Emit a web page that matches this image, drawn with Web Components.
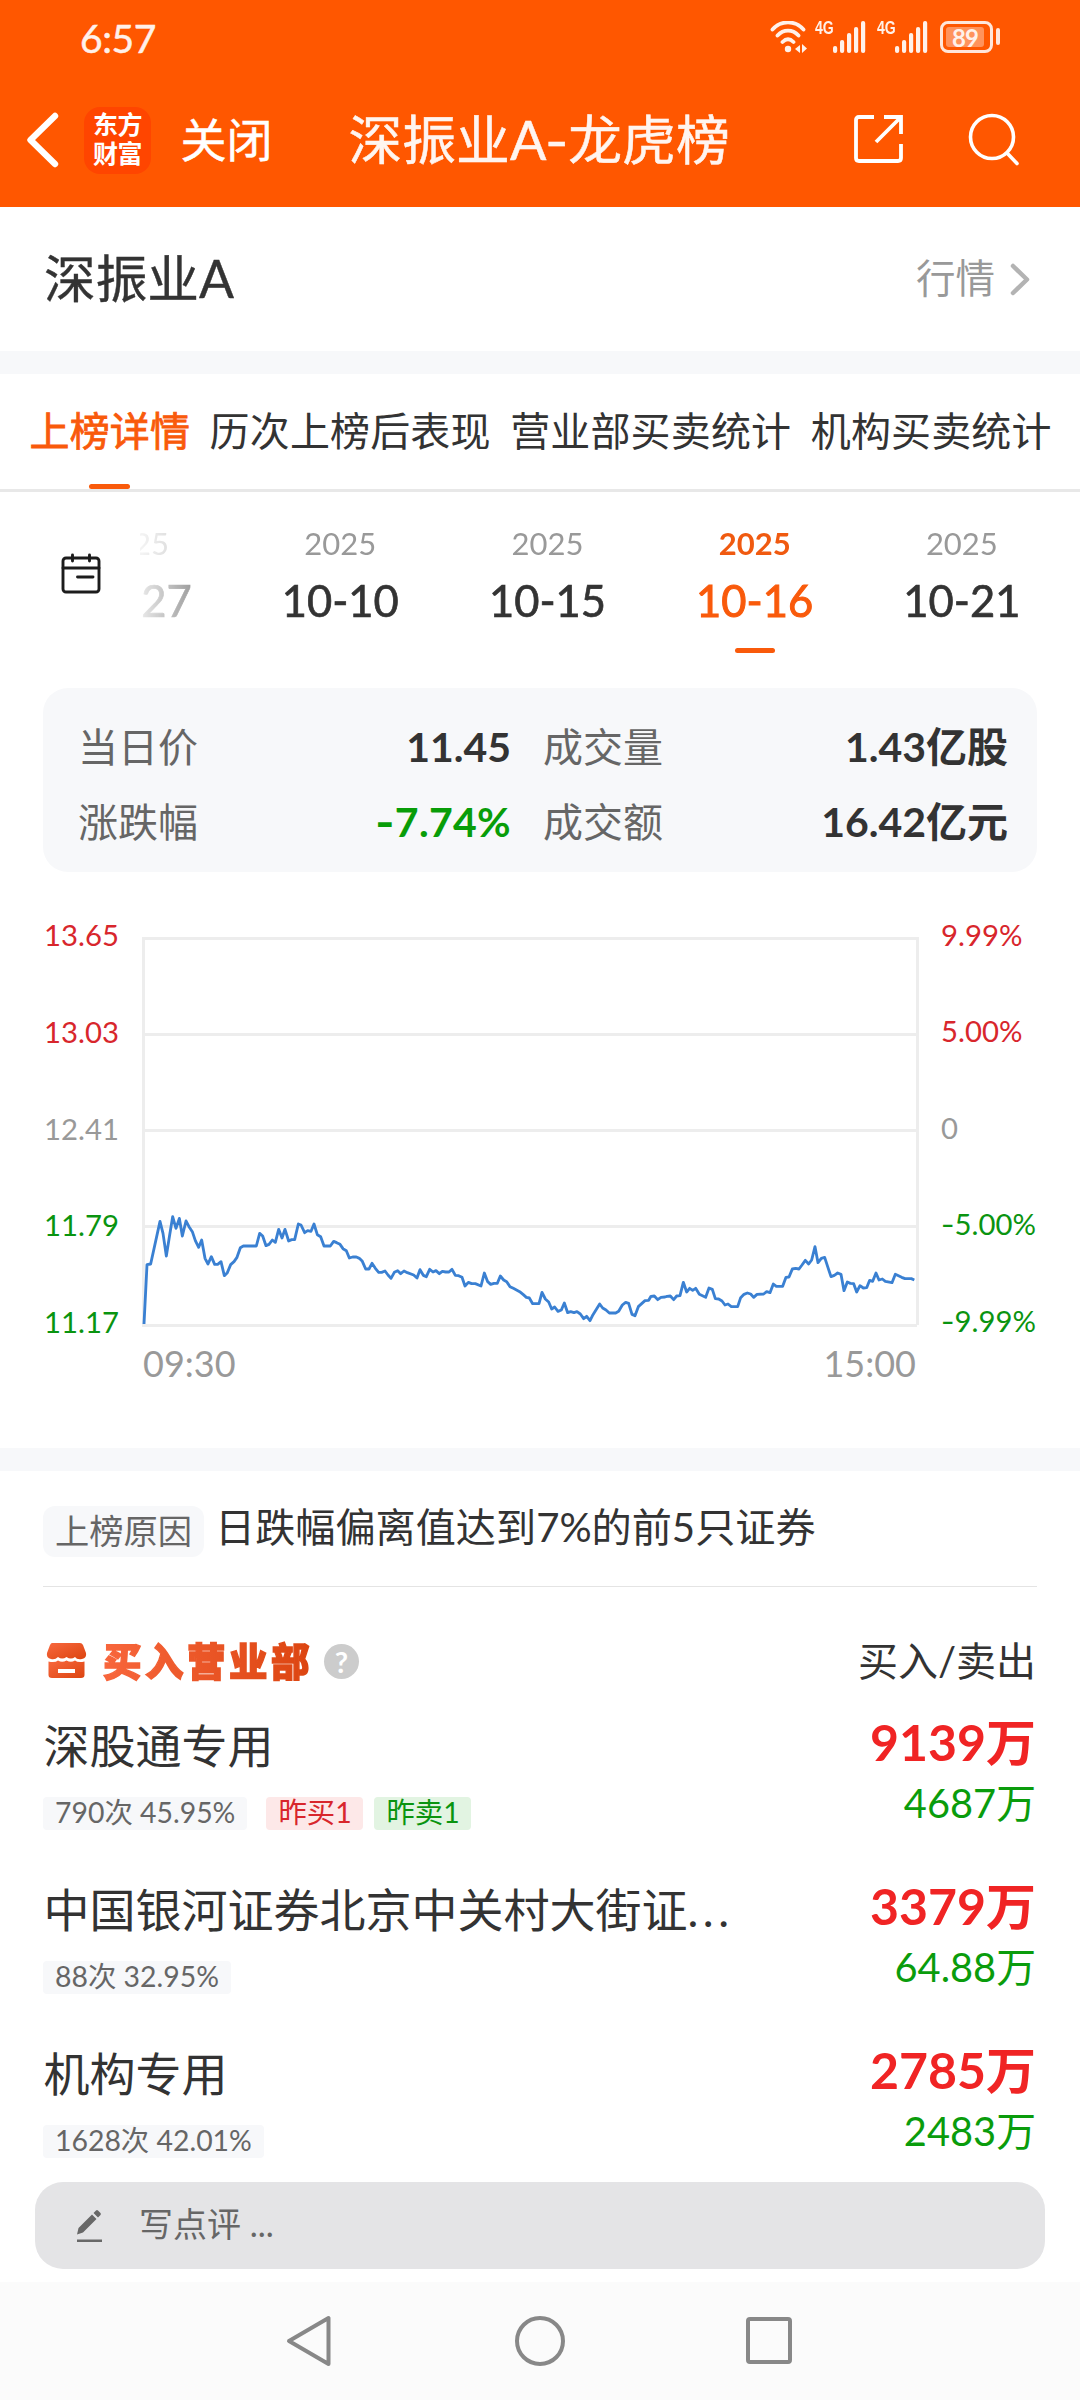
<!DOCTYPE html>
<html lang="zh-CN">
<head>
<meta charset="utf-8">
<title>深振业A-龙虎榜</title>
<style>
html,body{margin:0;padding:0;background:#fff}
body{width:1080px;height:2400px;overflow:hidden;font-family:Lato,"Noto Sans CJK SC",sans-serif;color:#333;-webkit-font-smoothing:antialiased}
</style>
</head>
<body>
<lhb-app></lhb-app>
<script>
const define = (name, html, setup) => customElements.define(name, class extends HTMLElement {
  constructor() {
    super();
    const t = document.createElement('template');
    t.innerHTML = '<style>:host{display:block;box-sizing:border-box}*{box-sizing:border-box}svg{display:block;flex:none}</style>' + html;
    this.attachShadow({mode: 'open'}).append(t.content.cloneNode(true));
  }
  connectedCallback() { if (setup) setup(this, this.shadowRoot); }
});

define('status-bar', `
<style>
:host{display:flex;height:76px;align-items:center;padding:0 80px 0 80px;justify-content:space-between;color:#fff1ea;font-size:39px;letter-spacing:-.4px}
.time{-webkit-text-stroke:.5px #fff1ea}
.r{display:flex;align-items:flex-start;height:32px;margin-top:-3px}
.g{font:700 18px/15px "Liberation Sans",sans-serif;letter-spacing:0;width:24px;transform:scaleX(.78);transform-origin:0 0;margin-right:-6px}
.bat{display:flex;align-items:center;margin-left:11.5px}
.cell{width:53px;height:32px;border:3px solid #ffe6da;border-radius:8px;padding:3px;display:flex}
.lv{width:38px;background:rgba(255,255,255,.36);border-radius:3px;font-size:24px;line-height:21px;height:20px;padding-left:6px;font-weight:700;letter-spacing:-1px;white-space:nowrap}
.cap{width:4px;height:17px;border-radius:2px;background:#ffe6da;margin-left:3px}
</style>
<span class="time">6:57</span>
<div class="r">
<svg width="38" height="32" viewBox="0 0 38 32" fill="none" stroke="#fff1ea" stroke-width="3.8" stroke-linecap="round"><path d="M2.5 8.5C11-1 25-1 33.500 8.500M7.500 14.500C13.500 8 22.500 8 28.500 14.500M12.500 21C16 17.500 20 17.500 23.500 21"/><circle cx="18" cy="28" r="3.200" fill="#fff1ea" stroke="none"/><path d="M30 24v8l-5-4zM32 23l5 4.500-5 4.500z" fill="#fff1ea" stroke="none"/></svg>
<span class="g" style="margin-left:7px">4G</span>
<svg width="34" height="32" fill="#fff1ea"><rect y="25" width="4.200" height="7" rx="2"/><rect x="7" y="19" width="4.200" height="13" rx="2"/><rect x="14" y="12" width="4.200" height="20" rx="2"/><rect x="21" y="6" width="4.200" height="26" rx="2"/><rect x="28" width="4.200" height="32" rx="2"/></svg>
<span class="g" style="margin-left:9.500px">4G</span>
<svg width="34" height="32" fill="#fff1ea"><rect y="25" width="4.200" height="7" rx="2"/><rect x="7" y="19" width="4.200" height="13" rx="2"/><rect x="14" y="12" width="4.200" height="20" rx="2"/><rect x="21" y="6" width="4.200" height="26" rx="2"/><rect x="28" width="4.200" height="32" rx="2"/></svg>
<div class="bat"><div class="cell"><div class="lv">89</div></div><div class="cap"></div></div>
</div>`);

define('nav-header', `
<style>
:host{display:flex;height:131px;align-items:center;padding-left:26px;color:#fff}
.logo{width:67px;height:67px;margin:-3px 0 0 24px;border-radius:16px;background:#ff4500;font-weight:700;font-size:25px;line-height:29.500px;text-align:center;padding-top:3px;letter-spacing:-.5px}
.close{font-size:46px;line-height:60px;margin:-3px 0 0 29.500px;-webkit-text-stroke:.5px #fff}
.title{font-size:53.800px;line-height:70px;margin:-3px 0 0 76px;width:384px;white-space:nowrap;color:#fff5f0;-webkit-text-stroke:.5px #fff5f0}
.title i{font-style:normal;font-family:Inter,Lato,sans-serif;font-size:50px;margin-left:-1px}
</style>
<svg width="34" height="58" viewBox="0 0 34 58" fill="none" stroke="#fff" stroke-width="6.400" stroke-linecap="round" stroke-linejoin="round" style="margin-top:-4px"><path d="M29 5 4.500 29 29 53"/></svg>
<div class="logo">东方<br>财富</div>
<span class="close">关闭</span>
<span class="title">深振业A<i>-</i>龙虎榜</span>
<svg width="50" height="50" viewBox="0 0 50 50" fill="none" stroke="#fff" stroke-width="3.800" style="margin:-5px 0 0 120px"><path d="M21 3H6Q3 3 3 6V44Q3 47 6 47H45Q48 47 48 44V30M31 3H48V20M46 5 23 28"/></svg>
<svg width="54" height="54" viewBox="0 0 54 54" fill="none" stroke="#fff" stroke-width="3.600" stroke-linecap="round" style="margin:-4px 0 0 65px"><circle cx="24" cy="24" r="21.500"/><path d="m39.500 40.500 9.500 10"/></svg>`);

define('stock-title', `
<style>
:host{display:flex;height:144px;align-items:center;justify-content:space-between;padding:0 50px 3px 44px}
.n{font-size:51.700px;line-height:66px;-webkit-text-stroke:.4px #333}
.m{display:flex;align-items:center;font-size:39.500px;line-height:50px;color:#999;gap:15px}
</style>
<span class="n"><slot></slot></span>
<span class="m">行情<svg width="20" height="34" fill="none" stroke="#b3b3b3" stroke-width="4.500" stroke-linecap="round" stroke-linejoin="round" viewBox="0 0 20 34" style="margin-top:3px"><path d="M3 4 17 17.500 3 31"/></svg></span>`);

define('page-band', `<style>:host{height:23px;background:#f7f8fa}</style>`);

define('tab-item', `
<style>
:host{display:flex;flex-direction:column;align-items:center;height:115px;font-size:40px;line-height:110px;letter-spacing:.15px;white-space:nowrap;color:#333}
:host([active]){color:#f95a0b;-webkit-text-stroke:.8px #f95a0b}
i{width:41px;height:5px;border-radius:3px}
:host([active]) i{background:#f95a0b}
.t{height:110px;padding-top:2px}
</style><span class="t"><slot></slot></span><i></i>`);

define('tab-bar', `
<style>:host{display:flex;height:118px;gap:19.500px;padding-left:29.500px;border-bottom:3px solid #e8e8e8}</style><slot></slot>`);

define('date-item', `
<style>
:host{display:flex;flex:none;flex-direction:column;align-items:center;width:207.200px;color:#333}
.y{font-size:31px;line-height:36px;margin-top:32.500px;color:#999}
.d{font-size:43.500px;line-height:50px;margin-top:14.500px;-webkit-text-stroke:.7px #333}
i{width:40px;height:5px;border-radius:3px;margin-top:23px}
:host([active]) .y{color:#f05a10;font-weight:700}
:host([active]) .d{color:#f95a0b;-webkit-text-stroke:1px #f95a0b}
:host([active]) i{background:#f95a0b}
</style><span class="y">2025</span><span class="d"><slot></slot></span><i></i>`);

define('date-strip', `
<style>
:host{display:flex;height:196px}
.c{width:140px;padding:61px 0 0 60px;flex:none}
.l{display:flex;flex:1;overflow:hidden;-webkit-mask-image:linear-gradient(90deg,rgba(0,0,0,.1),rgba(0,0,0,.45) 48px,#000 125px);mask-image:linear-gradient(90deg,rgba(0,0,0,.1),rgba(0,0,0,.45) 48px,#000 125px)}
.l ::slotted(date-item:first-of-type){margin-left:-110.500px}
</style>
<div class="c"><svg width="42" height="42" viewBox="0 0 42 42" fill="none" stroke="#1c1c1c" stroke-width="2.900" stroke-linecap="round"><rect x="3" y="5" width="36" height="34" rx="3"/><path d="M3 15H39M12.500 2v6M29.500 2v6"/><path d="M17.500 24H33"/></svg></div>
<div class="l"><slot></slot></div>`);

define('stat-card', `
<style>
:host{display:flex;margin:0 43px;height:184px;padding:22px 29px 13px 35px;border-radius:25px;background:#f7f8fa;flex-direction:column;font-size:40px;line-height:74px}
div{display:flex;height:74.500px}
span{color:#666;width:150px}
b{text-align:right;color:#333;font-size:41px}
b:nth-of-type(1){width:283px;margin-right:32px}
b:nth-of-type(2){flex:1}
.g{color:#089d08;letter-spacing:.3px}
i{font-style:normal;font-family:Inter,Lato,sans-serif}
</style>
<div><span>当日价</span><b>11.45</b><span>成交量</span><b>1.43亿股</b></div>
<div><span>涨跌幅</span><b class="g"><i>-</i>7.74%</b><span>成交额</span><b>16.42亿元</b></div>`);

define('price-chart', `
<style>
:host{display:flex;height:576px;padding:45px 0 0 44px;font-size:29.300px;flex-direction:column}
.row{display:flex}
.ax{display:flex;flex-direction:column;height:423px;justify-content:space-between;line-height:36px}
.l{width:98px}.r{padding-left:22px}
.u{color:#d8262c}.z{color:#999}.d{color:#0a9410}
i{font-style:normal;font-family:Inter,Lato,sans-serif}
.plot{padding-top:20px}
.t{display:flex;justify-content:space-between;width:773px;margin-left:99px;font-size:36px;line-height:44px;color:#999;margin-top:1px}
</style>
<div class="row">
<div class="ax l"><span class="u">13.65</span><span class="u">13.03</span><span class="z">12.41</span><span class="d">11.79</span><span class="d">11.17</span></div>
<div class="plot"><svg width="777" height="390" fill="none"><g stroke="#ededed" stroke-width="3"><path d="M0 1.500H776M0 97.500H776M0 193.500H776M0 289.500H776M0 388.500H775"/><path d="M1.500 0V390M775.500 0V388"/></g><polyline transform="translate(-22 243) scale(.333333)" stroke="#3a80d2" stroke-width="8.500" stroke-linejoin="round"/></svg></div>
<div class="ax r"><span class="u">9.99%</span><span class="u">5.00%</span><span class="z">0</span><span class="d"><i>-</i>5.00%</span><span class="d"><i>-</i>9.99%</span></div>
</div>
<div class="t"><span>09:30</span><span>15:00</span></div>`, (el, root) => {
  const morning = '72,432 81,254 92,252 120,124 129,160 139,228 149,165 158,110 168,145 178,115 187,168 198,123 207,140 217,155 226,182 236,202 245,180 255,235 264,252 274,230 284,253 293,253 303,245 313,287 322,278 332,254 342,245 351,232 361,203 370,198 409,198 419,160 428,168 438,197 447,193 457,180 466,187 476,148 486,174 495,148 506,183 515,179 524,179 535,132 543,135 554,158 563,152 573,154 582,132 592,164 602,170 612,198 631,198 641,184 650,188 660,193 669,206 679,212 688,234 698,231 709,231 718,235 727,244 737,267 747,267 756,250 766,265 776,277 785,277 795,273 804,285 813,295 823,277 833,272 842,281 852,273 862,278 881,285 891,294 900,269 910,286 919,290 929,268 939,276 948,272 958,281 967,274 977,276 987,276 996,268 1006,286 1016,287 1026,292 1035,318 1045,307 1055,311 1066,311 1083,318 1093,279 1103,305 1112,313 1122,310 1132,310 1141,288 1151,300 1160,305 1170,320 1180,325 1199,335';
  const afternoon = '10,344 19,352 28,354 38,371 57,371 66,337 76,357 86,366 95,387 104,381 114,394 124,390 133,369 143,398 152,395 162,398 171,395 181,402 191,416 200,409 210,422 219,404 239,372 248,384 258,390 268,399 287,399 296,394 307,375 317,367 326,370 336,403 345,407 355,380 375,362 386,361 393,349 403,348 413,359 423,352 435,351 441,349 451,348 461,359 470,348 480,347 490,307 500,336 509,325 518,331 527,325 538,343 557,352 567,324 577,328 586,356 596,357 606,363 615,375 624,372 634,380 653,380 662,353 672,343 682,339 692,342 701,352 711,343 731,342 740,335 750,338 760,312 769,319 788,319 798,292 807,291 817,267 827,265 837,267 846,255 856,241 866,252 875,240 885,200 894,248 904,235 914,232 924,263 933,290 943,286 953,279 963,283 972,332 982,306 991,310 1001,311 1010,336 1020,317 1030,324 1040,323 1049,301 1058,304 1068,279 1077,300 1087,297 1096,304 1116,308 1126,283 1145,292 1155,296 1174,296 1183,300';
  const shifted = afternoon.split(' ').map(p => { const [x, y] = p.split(','); return (+x + 1200) + ',' + y; }).join(' ');
  root.querySelector('polyline').setAttribute('points', morning + ' ' + shifted);
});

define('reason-row', `
<style>
:host{display:flex;align-items:center;height:116px;margin:0 43px;border-bottom:1.500px solid #e4e4e4;font-size:40.150px;line-height:50px;white-space:nowrap}
.b{width:161px;height:51px;margin-top:6px;border-radius:12px;background:#f7f8fa;color:#666;font-size:34.300px;line-height:50px;text-align:center;margin-right:11px}
.t{margin-top:-3px}
</style><span class="b">上榜原因</span><span class="t"><slot></slot></span>`);

define('dept-head', `
<style>
:host{display:flex;align-items:center;height:118px;padding:30px 44px 0 46px;font-size:40px;line-height:50px}
.h{font-size:38.500px;font-weight:900;letter-spacing:3.500px;margin-left:16px;background:linear-gradient(90deg,#f8663c,#dc4510);-webkit-background-clip:text;background-clip:text;color:transparent;-webkit-text-stroke:1.400px transparent}
.q{width:35px;height:35px;border-radius:50%;background:#ccc;color:#fff;font-weight:700;font-size:29px;line-height:35px;text-align:center;margin:1px 0 0 11px}
.r{margin-left:auto}
</style>
<svg width="41" height="36" viewBox="0 0 41 36"><defs><linearGradient id="g" x2="1" y2="1"><stop stop-color="#f8683e"/><stop offset="1" stop-color="#dc4510"/></linearGradient></defs><path fill="url(#g)" d="M6 0H34Q36 0 37 2L40 10Q41 15 36 16 31 17 29 14 25 17 20.500 14 16 17 12 14 9 17 5 16 0 15 1 10L4 2Q5 0 6 0Z"/><path fill="url(#g)" fill-rule="evenodd" d="M2.500 18.500Q9 20 12 17.500 16 20 20.500 17.500 25 20 29 17.500 32 20 38.500 18.500V32Q38.500 35 35 35H6Q2.500 35 2.500 32ZM12 26V30H29V26Z"/></svg>
<span class="h">买入营业部</span><span class="q">?</span><span class="r">买入/卖出</span>`);

define('info-chip', `
<style>
:host{display:inline-block;height:33px;border-radius:4px;padding:0 12px;background:#f7f8fa;color:#666;font-size:28.400px;line-height:31.500px;white-space:nowrap}
:host([kind=buy]){background:#fde8e8;color:#d8262c;margin-left:19px;width:97px}
:host([kind=sell]){background:#e2f4e2;color:#0a9410;margin-left:11px;width:97px}
</style><slot></slot>`);

define('dept-row', `
<style>
:host{display:flex;height:164px;justify-content:space-between;padding:0 44px 0 43px}
.n{font-size:46px;line-height:82px;height:84px;white-space:nowrap;padding-left:.5px}
.c{display:flex;margin-top:8px}
.a{display:flex;flex-direction:column;align-items:flex-end}
.buy{font-size:50px;font-weight:700;line-height:75px;height:76px;color:#f02424}
.sell{font-size:39.800px;line-height:44px;color:#0a9c0c}
</style>
<div><div class="n"><slot name="name"></slot></div><div class="c"><slot></slot></div></div>
<div class="a"><span class="buy"><slot name="buy"></slot></span><span class="sell"><slot name="sell"></slot></span></div>`);

define('comment-bar', `
<style>
:host{height:100px;padding:0 35px}
div{height:87px;border-radius:28px;background:#e4e4e6;display:flex;align-items:center;padding-left:41px;color:#666;font-size:34px;line-height:42px}
span{margin:-4px 0 0 35px}
</style>
<div><svg width="28" height="34" viewBox="0 0 28 34" fill="#686868"><path d="M1 25.500 2.500 19 16 5.500l4.500 4.500L7 23.500ZM17.500 4 20 1.500Q21 .5 22 1.500L24.500 4Q25.300 5 24.500 6L22 8.500Z"/><rect x="1" y="30.500" width="25" height="2.500"/></svg><span><slot></slot></span></div>`);

define('system-nav', `
<style>:host{display:flex;height:118px;background:#fbfbfb;align-items:center;padding-left:284px}</style>
<svg width="50" height="56" viewBox="0 0 50 56" fill="none" stroke="#888" stroke-width="4" stroke-linejoin="round"><path d="M44.500 5V51L5 28Z"/></svg>
<svg width="56" height="56" fill="none" stroke="#888" stroke-width="4" style="margin-left:178px"><circle cx="28" cy="28" r="23"/></svg>
<svg width="50" height="56" fill="none" stroke="#888" stroke-width="4" style="margin-left:176px"><rect x="4" y="6" width="42" height="43" rx="2"/></svg>`);

define('lhb-app', `
<style>
:host{display:flex;flex-direction:column;width:1080px;height:2400px;background:#fff}
header{background:#ff5700}
main{height:595px;overflow:hidden}
.dots{letter-spacing:4.500px}
</style>
<header><status-bar></status-bar><nav-header></nav-header></header>
<stock-title>深振业A</stock-title>
<page-band></page-band>
<tab-bar><tab-item active>上榜详情</tab-item><tab-item>历次上榜后表现</tab-item><tab-item>营业部买卖统计</tab-item><tab-item>机构买卖统计</tab-item></tab-bar>
<date-strip><date-item>09-27</date-item><date-item>10-10</date-item><date-item>10-15</date-item><date-item active>10-16</date-item><date-item>10-21</date-item></date-strip>
<stat-card></stat-card>
<price-chart></price-chart>
<page-band></page-band>
<reason-row>日跌幅偏离值达到7%的前5只证券</reason-row>
<main>
<dept-head></dept-head>
<dept-row><span slot="name">深股通专用</span><info-chip>790次 45.95%</info-chip><info-chip kind="buy">昨买1</info-chip><info-chip kind="sell">昨卖1</info-chip><span slot="buy">9139万</span><span slot="sell">4687万</span></dept-row>
<dept-row><span slot="name">中国银河证券北京中关村大街证<span class="dots">...</span></span><info-chip>88次 32.95%</info-chip><span slot="buy">3379万</span><span slot="sell">64.88万</span></dept-row>
<dept-row><span slot="name">机构专用</span><info-chip>1628次 42.01%</info-chip><span slot="buy">2785万</span><span slot="sell">2483万</span></dept-row>
</main>
<comment-bar>写点评 ...</comment-bar>
<system-nav></system-nav>`);
</script>
</body>
</html>
